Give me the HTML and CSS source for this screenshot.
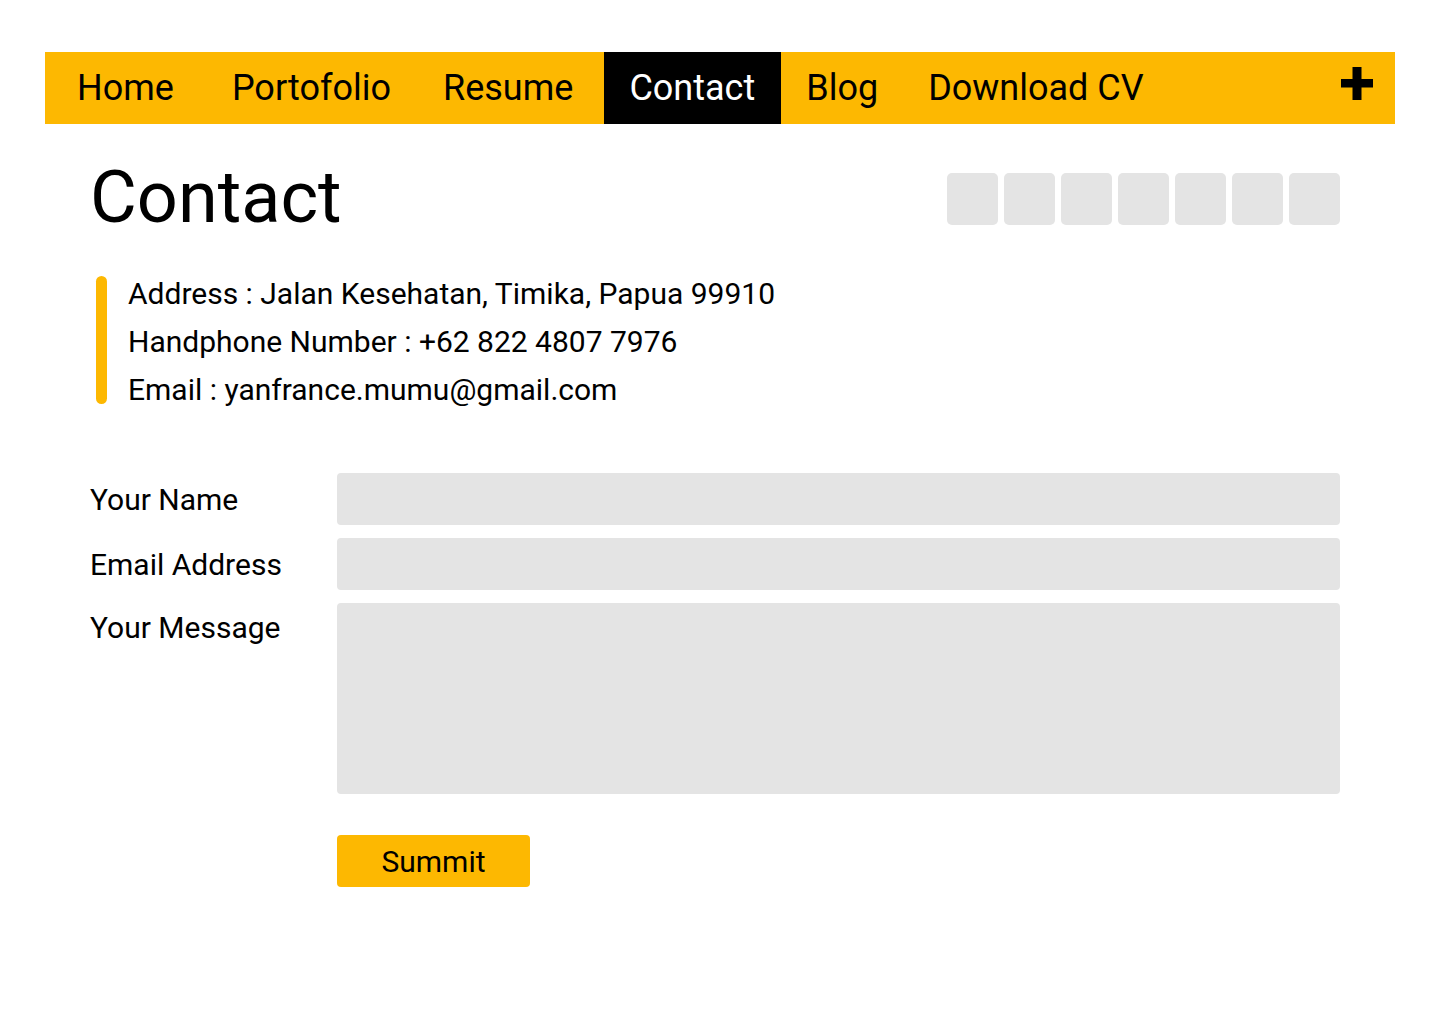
FILE: index.html
```html
<!DOCTYPE html>
<html lang="en">
<head>
<meta charset="utf-8">
<title>Contact</title>
<link rel="stylesheet" href="styles.css">
</head>
<body>
<nav class="nav">
  <a class="nav-item" href="#">Home</a>
  <a class="nav-item nav-portfolio" href="#">Portofolio</a>
  <a class="nav-item nav-resume" href="#">Resume</a>
  <a class="nav-item nav-contact active" href="#">Contact</a>
  <a class="nav-item nav-blog" href="#">Blog</a>
  <a class="nav-item" href="#">Download CV</a>
  <span class="nav-plus">
    <svg width="32" height="33" viewBox="0 0 32 33"><path d="M11.5 0h9v12H32v8.5H20.5V33h-9V20.5H0V12h11.5z" fill="#000"/></svg>
  </span>
</nav>
<main class="content">
  <header class="head">
    <h1 class="title">Contact</h1>
    <div class="socials">
      <span class="social"></span><span class="social"></span><span class="social"></span><span class="social"></span><span class="social"></span><span class="social"></span><span class="social"></span>
    </div>
  </header>
  <section class="info">
    <span class="info-bar"></span>
    <div class="info-lines">
      <p>Address : Jalan Kesehatan, Timika, Papua 99910</p>
      <p>Handphone Number : +62 822 4807 7976</p>
      <p>Email : yanfrance.mumu@gmail.com</p>
    </div>
  </section>
  <form class="form">
    <label class="label">Your Name</label>
    <input class="field" type="text">
    <label class="label">Email Address</label>
    <input class="field" type="email">
    <label class="label label-top">Your Message</label>
    <textarea class="field area"></textarea>
    <span></span>
    <button class="btn" type="button">Summit</button>
  </form>
</main>
</body>
</html>
```

FILE: styles.css
```css
* { box-sizing: border-box; }
body {
  margin: 0;
  background: #fff;
  font-family: Roboto, "Noto Sans", sans-serif;
  color: #000;
}
.nav {
  margin: 52px 45px 0;
  height: 72px;
  background: #fdb801;
  display: flex;
  align-items: stretch;
  padding-left: 7px;
}
.nav-item {
  display: flex;
  align-items: center;
  padding: 0 25px;
  font-size: 36px;
  color: #000;
  text-decoration: none;
}
.nav-portfolio { margin-left: 8px; }
.nav-resume { margin-left: 2px; }
.nav-contact { margin-left: 6px; padding: 0 26px 0 25px; }
.nav-item.active {
  background: #000;
  color: #fff;
}
.nav-plus {
  margin-left: auto;
  margin-right: 22px;
  display: flex;
  align-items: flex-start;
  padding-top: 15px;
}
.content {
  margin: 0 100px 0 90px;
}
.head {
  display: flex;
  justify-content: space-between;
  align-items: center;
  margin-top: 32px;
}
.title {
  margin: 0;
  font-size: 72px;
  font-weight: 400;
  line-height: 84px;
}
.socials {
  display: flex;
  gap: 6px;
  margin-top: 2px;
}
.social {
  width: 51px;
  height: 52px;
  border-radius: 5px;
  background: #e4e4e4;
}
.info {
  margin: 30px 0 0 6px;
  display: flex;
  align-items: center;
  gap: 21px;
}
.info-bar {
  width: 11px;
  height: 128px;
  border-radius: 6px;
  background: #fdb801;
  margin-top: -5px;
}
.info-lines p {
  margin: 0;
  font-size: 30px;
  line-height: 48px;
}
.form {
  margin-top: 59px;
  display: grid;
  grid-template-columns: 247px 1fr;
  row-gap: 13px;
  align-items: center;
}
.label {
  font-size: 30px;
}
.label-top {
  align-self: start;
  padding-top: 7px;
}
.field {
  height: 52px;
  border: none;
  border-radius: 4px;
  background: #e4e4e4;
  font: inherit;
}
.area {
  height: 191px;
  resize: none;
  align-self: start;
}
.btn {
  margin-top: 28px;
  width: 193px;
  height: 52px;
  border: none;
  border-radius: 4px;
  background: #fdb801;
  font-family: Roboto, sans-serif;
  font-size: 30px;
  color: #000;
  padding: 0;
}
```
